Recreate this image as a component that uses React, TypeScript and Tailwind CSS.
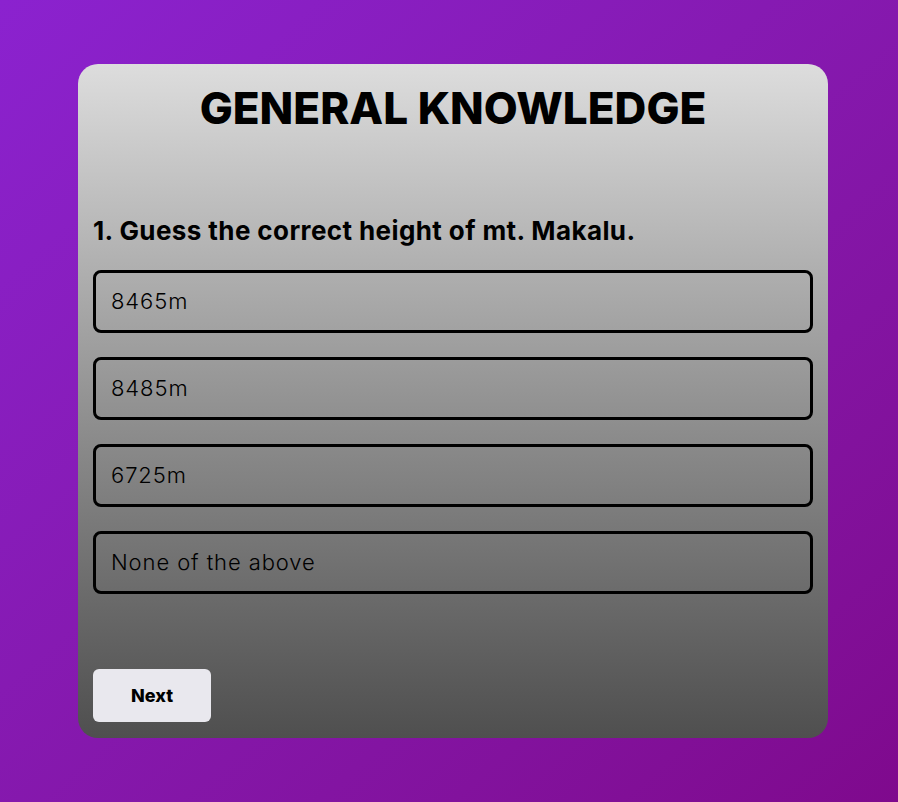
const options = ["8465m", "8485m", "6725m", "None of the above"];

export default function App() {
  return (
    <div
      className="min-h-[802px] w-full bg-gradient-to-br from-[#8b22cf] to-[#7f098d] pt-[64px]"
      style={{ fontFamily: "Inter, 'Noto Sans', sans-serif" }}
    >
      <div className="ml-[78px] flex h-[674px] w-[750px] flex-col rounded-[20px] bg-gradient-to-b from-[#dddddd] to-[#4f4f4f] px-[15px] pb-[16px]">
        {/* Title */}
        <h1 className="mt-[16px] text-center text-[44px] font-extrabold leading-[56px] text-black">
          GENERAL KNOWLEDGE
        </h1>

        {/* Question */}
        <h2 className="mt-[79px] text-[26px] font-bold leading-[32px] tracking-[0.4px] text-black">
          1. Guess the correct height of mt. Makalu.
        </h2>

        <div className="mt-[23px] flex flex-col gap-[24px]">
          {options.map((o) => (
            <button
              key={o}
              className="flex h-[63px] w-full items-center rounded-[8px] border-[3px] border-black px-[15px] text-left text-[22px] font-light tracking-[0.9px] text-black"
            >
              {o}
            </button>
          ))}
        </div>

        <div className="mt-auto">
          <button className="h-[53px] w-[118px] rounded-[6px] bg-[#e9e8ee] text-[18px] font-extrabold text-black">
            Next
          </button>
        </div>
      </div>
    </div>
  );
}
